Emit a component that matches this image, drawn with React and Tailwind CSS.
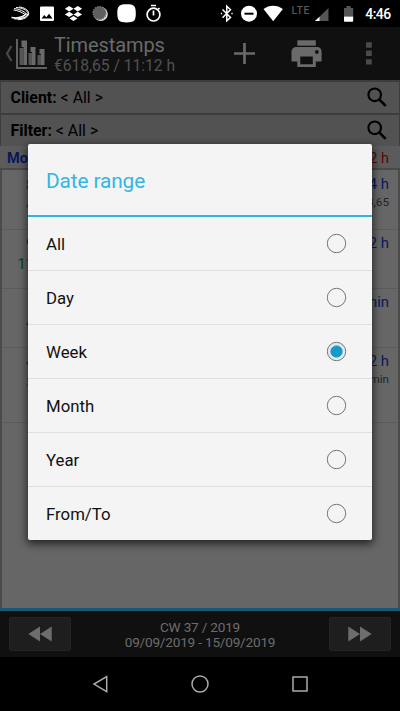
import { useState } from "react";

const options = ["All", "Day", "Week", "Month", "Year", "From/To"];

const entries = [
  { start: "8", end: "4", endPad: "pl-[24px]", total: "11:14 h", detail: "€618,65", height: "h-[59px]" },
  { start: "9", end: "11", endPad: "pl-[15.5px]", total: "2:12 h", detail: "", height: "h-[59px]" },
  { start: "", end: "4", endPad: "pl-[24px]", total: "48 min", detail: "", height: "h-[59px]" },
  { start: "4", end: "5", endPad: "pl-[24px]", total: "1:12 h", detail: "12 min", height: "h-[75px]" },
];

const StatusBar = () => (
  <div className="h-[27px] bg-black text-white">
    <svg width="400" height="27" viewBox="0 0 400 27" fill="none">
      {/* SwiftKey */}
      <g stroke="#fff" strokeWidth="1">
        <path d="M16 7.500c6 .2 11.500 2.500 12.300 6.500" />
        <path d="M19 7c5 .3 9.500 2.800 9.700 6.500" />
        <path d="M14 8.500c5 .5 10 2.500 12.500 5.500" />
        <path d="M13.500 10c4.500.5 9 2.500 11.500 4.500" />
        <path d="M11.500 17.500c6 .8 12-.5 15-4" strokeWidth="1.300" />
        <path d="M14 18.700c7 .5 12.500-1 14.300-5" strokeWidth="1.300" />
        <path d="M18 19.700c5.500-.2 10-2.200 10.700-6" />
      </g>
      {/* Picture */}
      <path fill="#fff" fillRule="evenodd" d="M41.300 6.500h11.400a1.300 1.300 0 0 1 1.300 1.300v11.900a1.300 1.300 0 0 1-1.300 1.300H41.300a1.300 1.300 0 0 1-1.300-1.300V7.800a1.300 1.300 0 0 1 1.300-1.300zM41.500 18.500h11L49 13.700l-2.700 3.500-2-2.300z" />
      {/* Dropbox */}
      <path fill="#fff" d="m69.200 6 4.300 2.700-4.300 2.700-4.300-2.700zM77.800 6l4.300 2.700-4.300 2.700-4.300-2.700zM69.200 11.700l4.300 2.700-4.300 2.700-4.300-2.700zM77.800 11.700l4.300 2.700-4.300 2.700-4.300-2.700zM73.500 15.900l4 2.500-4 2.600-4-2.600z" />
      {/* Moon dial */}
      <circle cx="100.800" cy="14" r="7" fill="#ddd" />
      <circle cx="99.500" cy="13" r="6.500" fill="#5e5e5e" stroke="#777" strokeWidth="1.200" strokeDasharray="1.500 1" />
      <path fill="#fff" d="M126.700 4.200c7.500 0 9.100 1.600 9.100 9.100s-1.600 9.200-9.100 9.200-9.400-1.700-9.400-9.200 1.900-9.100 9.400-9.100z" />
      {/* Stopwatch */}
      <circle cx="153.500" cy="14.600" r="6.400" stroke="#fff" strokeWidth="1.700" />
      <path stroke="#fff" strokeWidth="1.700" d="M151 5.500h5M153.500 10.500v5M158 9.500l1.500-1.500" />
      {/* Bluetooth */}
      <path stroke="#fff" strokeWidth="1.500" d="m222.500 9.500 8 8-3.700 3.400V6.300l3.700 3.400-8 8" />
      <path stroke="#fff" strokeWidth="1.300" d="M221.500 12.800v1.500M232 12.800v1.500" />
      <circle cx="249" cy="13.700" r="8" fill="#fff" />
      <path stroke="#000" strokeWidth="2" d="M244.500 13.700h9" />
      <path fill="#fff" d="M273.200 21.300 263.500 9.100c5.500-4.600 13.900-4.600 19.400 0z" />
      <text x="291.500" y="14" fill="#555" fontSize="10.500" fontFamily="Roboto, sans-serif" fontWeight="500" textLength="18">LTE</text>
      <path fill="#555" d="M328.500 8v13H315z" />
      <path fill="#fff" d="M319.500 16.700V21H315z" />
      <path fill="#555" d="M344 8h2.500V6h4.200v2h2.500v8.500H344z" />
      <path fill="#fff" d="M344 16.500h9.200V21a.8.8 0 0 1-.8.800h-7.600a.8.800 0 0 1-.8-.8z" />
      <text x="365.300" y="19" fill="#fff" fontSize="14" fontFamily="Roboto, sans-serif" fontWeight="500" textLength="25.800">4:46</text>
    </svg>
  </div>
);

const Header = () => (
  <header className="flex h-[53px] items-center bg-[#101010] text-[#6a6a6a]">
    <svg className="shrink-0" width="54" height="53" viewBox="0 0 54 53" fill="none">
      <path d="M11.500 19 7 26.500l4.500 7.500" stroke="#484848" strokeWidth="2.200" />
      <path d="M17 12v29h30" stroke="#606060" strokeWidth="2" />
      <path fill="#555" d="M19.500 21h4v17h-4zM28.500 26h3.500v12h-3.500zM37.500 28h3.500v10h-3.500z" />
      <path fill="#6a6a6a" d="M21.500 13.500H27V38h-3.500V20h-2zM30.500 20h5v18H32V25h-1.500zM39.500 22h5v16H41V27h-1.500z" />
    </svg>
    <div className="w-[166px] pt-[3px]">
      <div className="text-[20px] leading-[21px] tracking-[-0.1px]">Timestamps</div>
      <div className="text-[15.700px] leading-[19px] tracking-[-0.050px] text-[#505050]">€618,65 / 11:12 h</div>
    </div>
    <svg width="180" height="53" viewBox="220 27 180 53" fill="none">
      <path stroke="#6a6a6a" strokeWidth="2.700" d="M234 53.500h21M244.500 43v21" />
      <path fill="#6a6a6a" d="M297.300 40.300h18.500v5.400h-18.500z" />
      <path fill="#6a6a6a" fillRule="evenodd" d="M296.200 47h21a4.400 4.400 0 0 1 4.400 4.400v10h-5.800V67h-18.500v-5.600h-5.800v-10a4.400 4.400 0 0 1 4.700-4.400zM300.300 56.500v7.700h12.500v-7.700zM316.900 50a1.900 1.900 0 1 0 0 3.800 1.900 1.900 0 0 0 0-3.800z" />
      <path fill="#4a4a4a" d="M366 42.300h5.800v5.400H366zM366 50.600h5.800V56H366zM366 59.200h5.800v5.400H366z" />
    </svg>
  </header>
);

const FilterRow = ({ label }) => (
  <div className="flex h-[33px] items-center justify-between border-t-2 border-[#3d3d3d] bg-[#525252] pr-[11px] pl-[9.500px] text-[15.900px] text-black">
    <span className="pt-px"><b>{label}:</b> &lt; All &gt;</span>
    <svg width="22" height="22" viewBox="0 0 22 22" fill="none" stroke="#000" strokeWidth="2.100">
      <circle cx="8.700" cy="7.800" r="6.300" />
      <path d="m13.200 12.300 6.500 6.500" strokeWidth="2.600" />
    </svg>
  </div>
);

const Entry = ({ entry }) => (
  <div className={`flex justify-between border-b border-[#5b5b5b] pt-[4px] pr-[9px] text-[14.800px] ${entry.height}`}>
    <div className="text-[#0a420a]">
      <div className="h-5 pl-[24px] leading-[20px]">{entry.start}</div>
      <div className={`leading-[20px] ${entry.endPad}`}>{entry.end}</div>
    </div>
    <div className="text-right">
      <div className="leading-[19px] text-[#08195a]">{entry.total}</div>
      <div className="text-[11.700px] leading-[16px] text-[#242424]">{entry.detail}</div>
    </div>
  </div>
);

const SkipButton = ({ back }) => (
  <div className="flex h-[34px] w-[62px] items-center justify-center rounded-[2px] border border-[#242424] bg-[#1e1e1e]">
    <svg width="26" height="18" viewBox="0 0 26 18" fill="#6d6d6d" className={back ? "" : "rotate-180"}>
      <path d="M13 1.500v15L1.300 9zM24.700 1.500v15L13 9z" />
    </svg>
  </div>
);

const DateRangeDialog = () => {
  const [selected, setSelected] = useState("Week");

  return (
    <div className="absolute top-[144px] left-[28px] h-[396px] w-[344px] overflow-hidden rounded-[2px] bg-[#f4f4f4] shadow-[0_3px_9px_1px_rgba(0,0,0,0.65)]">
      <div className="flex h-[73px] items-center border-b-2 border-[#33b5e5] pl-[18px] text-[20.800px] tracking-[-0.100px] text-[#33b5e5]">
        <span className="pt-[4px]">Date range</span>
      </div>
      {options.map((option) => (
        <button
          key={option}
          onClick={() => setSelected(option)}
          className="flex h-[54px] w-full items-center justify-between border-b border-[#dfdfdf] pr-[25px] pl-[18px] text-left text-[16.800px] text-[#111] last:border-transparent"
        >
          <span className="pt-[3px]">{option}</span>
          <svg width="21" height="21" viewBox="0 0 21 21" fill="none">
            {selected === option && <circle cx="10.500" cy="10.500" r="8.500" fill="#d3eef8" />}
            <circle cx="10.500" cy="10.500" r="9.200" stroke="#777" />
            {selected === option && <circle cx="10.500" cy="10.500" r="5.600" fill="#109bce" stroke="#3886a1" />}
          </svg>
        </button>
      ))}
    </div>
  );
};

const App = () => {
  return (
    <div className="relative flex h-[711px] w-[400px] flex-col overflow-hidden bg-black font-[Roboto,sans-serif]">
      <StatusBar />
      <Header />
      <main className="flex h-[528px] flex-col bg-[#666]">
        <div className="border-x border-[#3d3d3d]">
          <FilterRow label="Client" />
          <FilterRow label="Filter" />
        </div>
        <div className="flex h-[24px] items-center justify-between border-b-2 border-[#494949] bg-[#5b5b5b] pt-[3px] pr-[11px] pl-[7px] text-[14.500px]">
          <b className="text-[#08195a]">Mon</b>
          <span className="text-[#5a0808]">11:12 h</span>
        </div>
        <div className="flex-1 border-x-2 border-[#4b4b4b] pt-px">
          {entries.map((entry, index) => (
            <Entry key={index} entry={entry} />
          ))}
        </div>
      </main>
      <footer className="flex h-[49px] items-center justify-between border-t-[3px] border-[#165b75] bg-[#101010] px-[9px] text-[#6d6d6d]">
        <SkipButton back />
        <div className="pt-[2px] text-center text-[13.600px] leading-[15.500px] tracking-[-0.200px]">
          <div>CW 37 / 2019</div>
          <div>09/09/2019 - 15/09/2019</div>
        </div>
        <SkipButton />
      </footer>
      <nav className="flex h-[54px] items-center justify-center bg-black">
        <svg width="220" height="24" viewBox="90 672 220 24" fill="none" stroke="#aaa" strokeWidth="1.500">
          <path d="M106.700 676.500v15.200L94 684.100z" />
          <circle cx="200" cy="684" r="8" />
          <path d="M293 677h14v14h-14z" />
        </svg>
      </nav>
      <DateRangeDialog />
    </div>
  );
};

export default App;
